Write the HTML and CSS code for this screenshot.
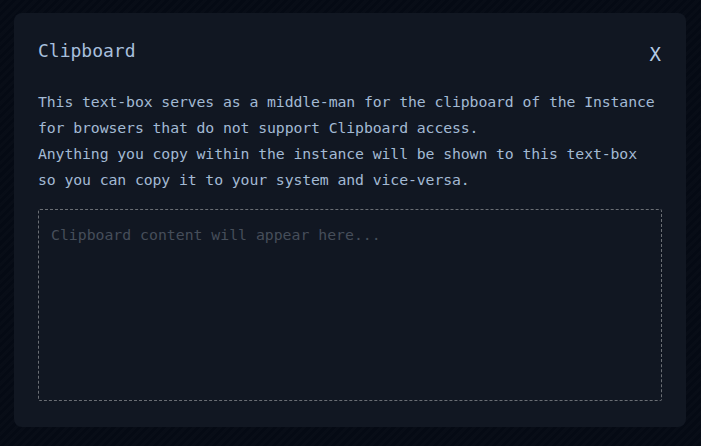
FILE: index.html
```html
<!DOCTYPE html>
<html lang="en">
<head>
<meta charset="utf-8">
<title>Clipboard</title>
<link rel="stylesheet" href="styles.css">
</head>
<body>
<div class="modal">
  <div class="modal-header">
    <h2 class="modal-title">Clipboard</h2>
    <button class="modal-close" type="button">X</button>
  </div>
  <p class="modal-text">This text-box serves as a middle-man for the clipboard of the Instance<br>for browsers that do not support Clipboard access.<br>Anything you copy within the instance will be shown to this text-box<br>so you can copy it to your system and vice-versa.</p>
  <textarea class="clip-area" placeholder="Clipboard content will appear here..."></textarea>
</div>
</body>
</html>
```

FILE: styles.css
```css
html, body {
  margin: 0;
  height: 100%;
}
body {
  background-color: #050a14;
  background-image: repeating-linear-gradient(135deg, rgba(255,255,255,0.012) 0 3px, rgba(0,0,0,0) 3px 6px);
  padding: 13px 15px 19px 14px;
  box-sizing: border-box;
  font-family: "DejaVu Sans Mono", monospace;
}
.modal {
  background: #111722;
  border-radius: 8px;
  height: 414px;
  box-sizing: border-box;
  padding: 28px 24px 26px 24px;
  display: flex;
  flex-direction: column;
}
.modal-header {
  display: flex;
  justify-content: space-between;
  align-items: center;
  height: 20px;
}
.modal-title {
  margin: 0;
  font-size: 18px;
  font-weight: normal;
  line-height: 20px;
  color: #a7bfdc;
}
.modal-close {
  background: none;
  border: 0;
  padding: 0;
  margin-top: 6px;
  margin-right: 1px;
  font-family: "DejaVu Sans Mono", monospace;
  font-size: 19px;
  line-height: 20px;
  color: #b4cae4;
  cursor: pointer;
}
.modal-text {
  margin: 28px 0 0 0;
  font-size: 14.8px;
  letter-spacing: -0.1px;
  line-height: 26px;
  color: #a3bad4;
}
.clip-area {
  margin-top: 16px;
  flex: 1;
  resize: none;
  background: transparent;
  border: 1px dashed #6a6e74;
  border-radius: 2px;
  padding: 12px;
  font-family: "DejaVu Sans Mono", monospace;
  font-size: 14.8px;
  line-height: 26px;
  color: #a3bad4;
}
.clip-area::placeholder {
  color: #464e5a;
}
```
